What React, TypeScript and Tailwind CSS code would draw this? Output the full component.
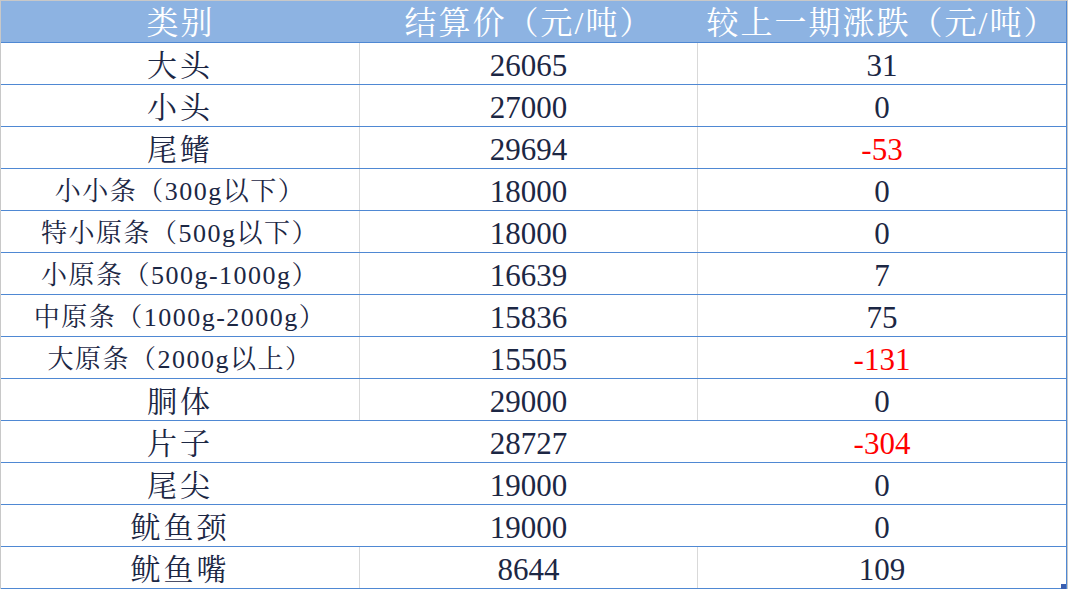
import React from "react";

type Row = { name: string; price: string; change: string; small?: boolean; lines: boolean };

const rows: Row[] = [
  { name: "大头", price: "26065", change: "31", lines: true },
  { name: "小头", price: "27000", change: "0", lines: true },
  { name: "尾鳍", price: "29694", change: "-53", lines: true },
  { name: "小小条（300g以下）", price: "18000", change: "0", small: true, lines: true },
  { name: "特小原条（500g以下）", price: "18000", change: "0", small: true, lines: true },
  { name: "小原条（500g-1000g）", price: "16639", change: "7", small: true, lines: true },
  { name: "中原条（1000g-2000g）", price: "15836", change: "75", small: true, lines: true },
  { name: "大原条（2000g以上）", price: "15505", change: "-131", small: true, lines: true },
  { name: "胴体", price: "29000", change: "0", lines: true },
  { name: "片子", price: "28727", change: "-304", lines: false },
  { name: "尾尖", price: "19000", change: "0", lines: false },
  { name: "鱿鱼颈", price: "19000", change: "0", lines: false },
  { name: "鱿鱼嘴", price: "8644", change: "109", lines: true },
];

const font = {
  fontFamily: '"Liberation Serif", "Noto Serif CJK SC", "Noto Sans CJK SC", serif',
};

export default function App() {
  return (
    <div
      className="relative w-[1068px] h-[589px] bg-white border-t border-l border-r border-[#c8c8c8] overflow-hidden"
      style={font}
    >
      <div className="w-full border-r border-[#4f88d3]">
        <div className="flex h-[42px] bg-[#8db3e2] border-b border-[#4f88d3] text-white text-[32px] leading-none">
          <div className="w-[359px] flex items-center justify-center pt-[3px] tracking-[2px]">类别</div>
          <div className="w-[338px] flex items-center justify-center pt-[3px] tracking-[2px]">结算价（元/吨）</div>
          <div className="flex-1 flex items-center justify-center pt-[3px] tracking-[2px]">较上一期涨跌（元/吨）</div>
        </div>
        {rows.map((r) => (
          <div key={r.name} className="flex h-[42px] border-b border-[#4f88d3] text-[#1c2744] leading-none">
            <div
              className={`w-[359px] flex items-center justify-center pt-[4px] border-r ${
                r.lines ? "border-[#d9d9d9]" : "border-transparent"
              } ${r.small ? "text-[26px] tracking-[1.5px]" : "text-[30px] tracking-[3px]"}`}
            >
              {r.name}
            </div>
            <div
              className={`w-[338px] flex items-center justify-center pt-[4px] text-[31px] border-r ${
                r.lines ? "border-[#d9d9d9]" : "border-transparent"
              }`}
            >
              {r.price}
            </div>
            <div
              className={`flex-1 flex items-center justify-center pt-[4px] text-[31px] ${
                r.change.startsWith("-") ? "text-[#ff0000]" : ""
              }`}
            >
              {r.change}
            </div>
          </div>
        ))}
      </div>
      <div className="absolute right-[1px] bottom-0 w-[5px] h-[5px] bg-[#3a5fb0]" />
    </div>
  );
}
